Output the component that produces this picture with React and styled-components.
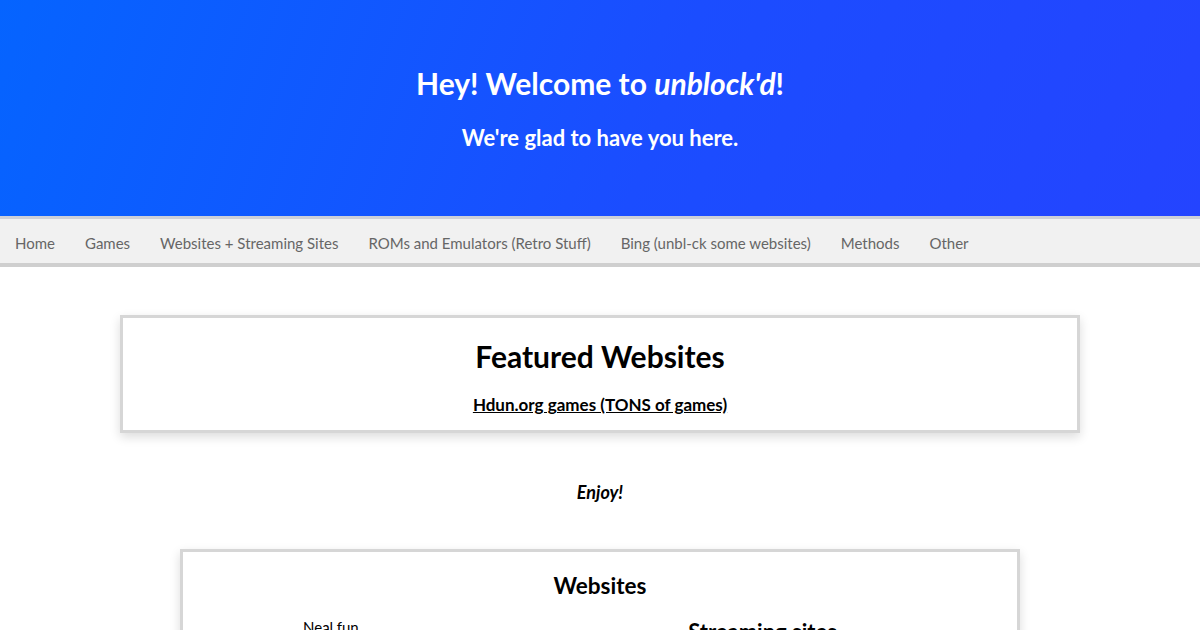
import styled, { createGlobalStyle } from "styled-components";

const GlobalStyle = createGlobalStyle`
    body {
        margin: 0;
        font-family: Lato, "Liberation Sans", sans-serif;
        background: #fff;
        color: #000;
    }
`

const navItems = [
    "Home",
    "Games",
    "Websites + Streaming Sites",
    "ROMs and Emulators (Retro Stuff)",
    "Bing (unbl-ck some websites)",
    "Methods",
    "Other",
]

export default function App() {
    return (
        <>
            <GlobalStyle />
            <Header>
                <Title>Hey! Welcome to <em>unblock'd</em>!</Title>
                <Subtitle>We're glad to have you here.</Subtitle>
            </Header>
            <NavBar>
                {navItems.map((item) => (
                    <NavLink key={item} href="#">{item}</NavLink>
                ))}
            </NavBar>
            <Main>
                <Card $width={960} $pad="17px 0 15px">
                    <CardTitle $size={30}>Featured Websites</CardTitle>
                    <FeaturedRow>
                        <FeaturedLink href="#">Hdun.org games (TONS of games)</FeaturedLink>
                    </FeaturedRow>
                </Card>
                <Enjoy>Enjoy!</Enjoy>
                <Card $width={840} $pad="18px 0 0">
                    <CardTitle $size={22.5}>Websites</CardTitle>
                    <Columns>
                        <LeftCol>
                            <SiteLink href="#">Neal.fun</SiteLink>
                        </LeftCol>
                        <RightCol>
                            <ColTitle>Streaming sites</ColTitle>
                        </RightCol>
                    </Columns>
                </Card>
            </Main>
        </>
    )
}

const Header = styled.header`
    height: 216px;
    box-sizing: border-box;
    padding-top: 62px;
    background: linear-gradient(110deg, #0564ff 0%, #1b4dff 55%, #2444ff 100%);
    color: #fff;
    text-align: center;
`
const Title = styled.h1`
    margin: 0;
    font-size: 30px;
    font-weight: 700;
    line-height: 42px;
    em {
        font-style: italic;
    }
`
const Subtitle = styled.h2`
    margin: 19px 0 0;
    font-size: 22px;
    font-weight: 700;
    line-height: 30px;
`
const NavBar = styled.nav`
    display: flex;
    background: #f1f1f1;
    border-top: 3px solid #cdd0d8;
    border-bottom: 4px solid #cfcfcf;
    height: 44px;
    align-items: center;
`
const NavLink = styled.a`
    padding: 4px 15px 0;
    font-size: 15px;
    color: #666;
    text-decoration: none;
    line-height: 40px;
`
const Main = styled.main`
    display: flex;
    flex-direction: column;
    align-items: center;
    padding-top: 48px;
`
const Card = styled.section`
    width: ${(p) => p.$width}px;
    box-sizing: border-box;
    border: 3px solid #d6d6d6;
    box-shadow: 0 4px 10px rgba(0, 0, 0, 0.14);
    background: #fff;
    text-align: center;
    padding: ${(p) => p.$pad};
`
const CardTitle = styled.h2`
    margin: 0;
    font-size: ${(p) => p.$size}px;
    font-weight: 700;
    line-height: ${(p) => p.$size * 1.4}px;
`
const FeaturedRow = styled.p`
    margin: 18px 0 0;
    line-height: 20px;
`
const FeaturedLink = styled.a`
    font-size: 17px;
    font-weight: 700;
    color: #000;
    text-decoration: underline;
`
const Enjoy = styled.p`
    margin: 47px 0 45px;
    font-size: 18px;
    font-weight: 700;
    font-style: italic;
    line-height: 24px;
`
const Columns = styled.div`
    display: grid;
    grid-template-columns: 1fr 1fr;
    margin-top: 15px;
`
const LeftCol = styled.div`
    text-align: left;
    padding-left: 120px;
    line-height: 20px;
`
const RightCol = styled.div`
    text-align: center;
    padding-right: 92px;
`
const SiteLink = styled.a`
    font-size: 15px;
    color: #000;
    text-decoration: none;
`
const ColTitle = styled.h3`
    margin: 0;
    font-size: 22px;
    font-weight: 700;
    line-height: 30px;
`
